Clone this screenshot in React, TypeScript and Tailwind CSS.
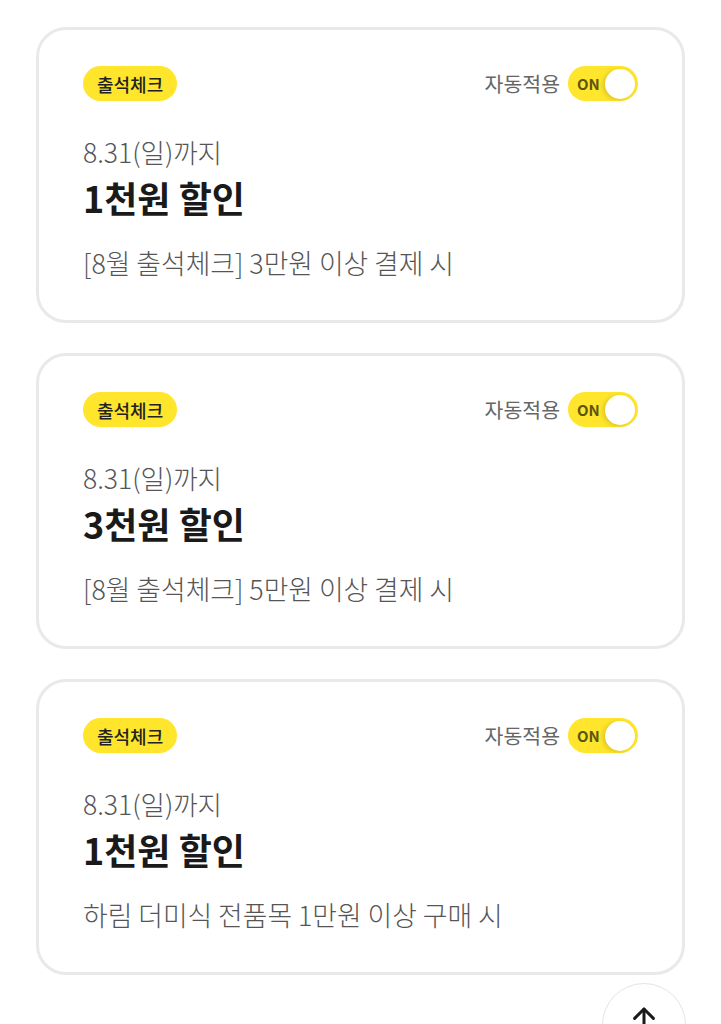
import React from "react";

type Coupon = {
  until: string;
  title: string;
  desc: string;
};

const coupons: Coupon[] = [
  { until: "8.31(일)까지", title: "1천원 할인", desc: "[8월 출석체크] 3만원 이상 결제 시" },
  { until: "8.31(일)까지", title: "3천원 할인", desc: "[8월 출석체크] 5만원 이상 결제 시" },
  { until: "8.31(일)까지", title: "1천원 할인", desc: "하림 더미식 전품목 1만원 이상 구매 시" },
];

const font = { fontFamily: '"Noto Sans CJK KR", "Noto Sans", sans-serif' };

const Toggle: React.FC = () => (
  <div className="flex items-center w-[70px] h-[35px] rounded-full bg-[#ffe52b] pl-[9px] pr-[3px]">
    <span className="text-[15px] font-bold text-[#5c5512] leading-none">ON</span>
    <span className="ml-auto w-[30px] h-[30px] rounded-full bg-white shadow-[-2px_1px_4px_rgba(120,100,0,0.25)]" />
  </div>
);

const CouponCard: React.FC<{ c: Coupon }> = ({ c }) => (
  <div className="border-[3px] border-[#ebe8ec] rounded-[30px] bg-white px-[44px] pt-[36px] pb-[40px]">
    <div className="flex items-center justify-between h-[35px]">
      <span className="h-[35px] px-[14px] rounded-full bg-[#ffe52b] flex items-center text-[18px] font-medium text-[#222] leading-none">
        출석체크
      </span>
      <div className="flex items-center gap-[8px]">
        <span className="text-[20.5px] text-[#666] leading-none">자동적용</span>
        <Toggle />
      </div>
    </div>
    <p className="mt-[34px] text-[26.5px] font-light text-[#555] leading-[34px]">{c.until}</p>
    <p className="mt-[5px] text-[36px] font-bold text-[#1a1a1a] leading-[46px]">{c.title}</p>
    <p className="mt-[26px] text-[26.8px] font-light text-[#555] leading-[34px]">{c.desc}</p>
  </div>
);

export default function App() {
  return (
    <div className="relative w-[721px] h-[1024px] overflow-hidden bg-white" style={font}>
      <div className="flex flex-col gap-[30px] px-[36px] pt-[27px]">
        {coupons.map((c, i) => (
          <CouponCard key={i} c={c} />
        ))}
      </div>

      {/* Scroll to top */}
      <button className="absolute left-[602px] top-[983px] w-[84px] h-[84px] rounded-full bg-white border border-[#e6e3e6] flex justify-center pt-[20px]">
        <svg width="30" height="30" viewBox="0 0 24 24" fill="none" stroke="#1a1a1a" strokeWidth="2.4" strokeLinecap="round" strokeLinejoin="round">
          <path d="M12 21V4" />
          <path d="M4.5 11.5 12 4l7.5 7.5" />
        </svg>
      </button>
    </div>
  );
}
